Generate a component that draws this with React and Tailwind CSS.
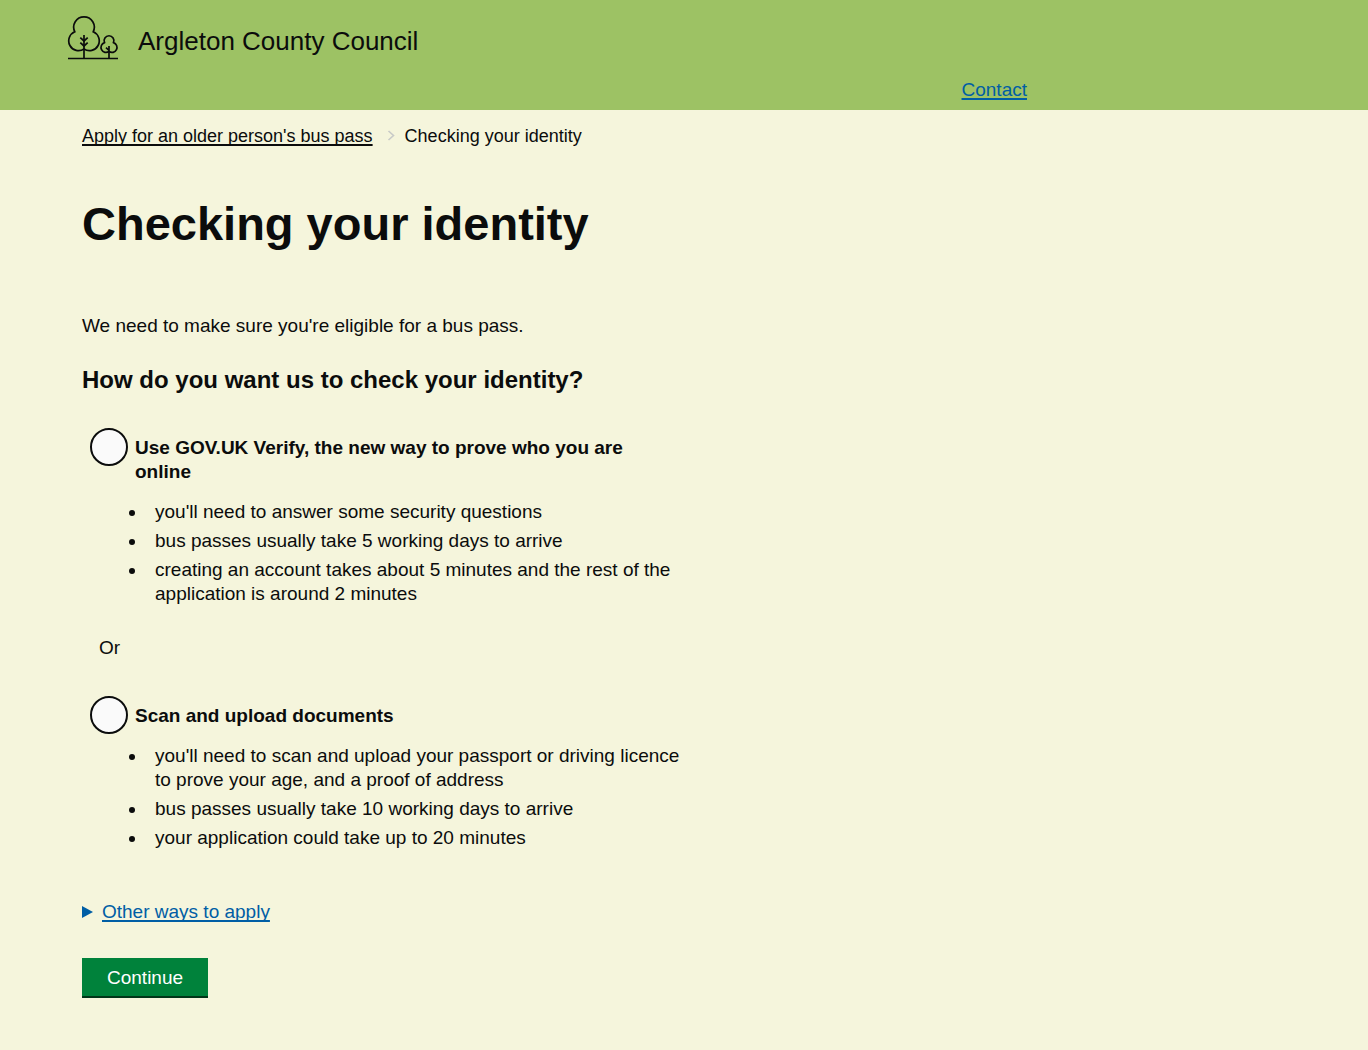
import React from "react";

const options = [
  {
    id: "verify",
    label: "Use GOV.UK Verify, the new way to prove who you are online",
    points: [
      "you'll need to answer some security questions",
      "bus passes usually take 5 working days to arrive",
      "creating an account takes about 5 minutes and the rest of the application is around 2 minutes",
    ],
  },
  {
    id: "upload",
    label: "Scan and upload documents",
    points: [
      "you'll need to scan and upload your passport or driving licence to prove your age, and a proof of address",
      "bus passes usually take 10 working days to arrive",
      "your application could take up to 20 minutes",
    ],
  },
];

function TreesLogo() {
  return (
    <svg
      aria-hidden="true"
      className="h-[46px] w-[52px] shrink-0"
      viewBox="0 0 52 46"
      fill="none"
      stroke="#0b0c0c"
      strokeWidth="1.7"
    >
      <path d="M1 43.5h50M17 44V20" />
      <path d="M7.800 16.800A10.300 10.300 0 1 1 26.200 16.800A9.800 9.800 0 1 1 17 34A9.800 9.800 0 1 1 7.800 16.800z" />
      <path d="M13.300 22.700l3.700 3.300 3.700-3.300M13.300 27.700l3.700 3.300 3.700-3.300" />
      <path d="M42 44V31M39 32.700l3 2.600" />
      <path d="M37.500 27.600A4.900 4.900 0 1 1 46.500 27.600A5.050 5.050 0 1 1 42 36.500A5.050 5.050 0 1 1 37.500 27.600z" />
    </svg>
  );
}

function Option({ id, label, points }) {
  return (
    <div className="flex pl-2">
      <input
        type="radio"
        name="identity"
        id={id}
        className="size-[38px] shrink-0 cursor-pointer appearance-none rounded-full border-2 border-[#0b0c0c] bg-[#fafafa] checked:bg-[#0b0c0c] checked:shadow-[inset_0_0_0_7px_#fafafa]"
      />
      <div className="min-w-0 pt-2 pl-[7px]">
        <label htmlFor={id} className="block max-w-[515px] cursor-pointer font-bold">
          {label}
        </label>
        <ul className="mt-4 flex list-disc flex-col gap-[5px] pl-3">
          {points.map((point) => (
            <li key={point} className="pl-2">{point}</li>
          ))}
        </ul>
      </div>
    </div>
  );
}

export default function App() {
  return (
    <div className="min-h-screen bg-[#f5f5dc] font-['Liberation_Sans',Arial,sans-serif] text-[19px] leading-6 text-[#0b0c0c]">
      <header className="bg-[#9dc264]">
        <div className="max-w-[1027px] pt-[15px] pb-2 pl-[67px]">
          <div className="flex items-center gap-[19px]">
            <TreesLogo />
            <span className="pt-[6px] text-[26px] leading-8">Argleton County Council</span>
          </div>
          <nav className="mt-[17px] flex justify-end">
            <a href="#contact" className="text-[#005ea5] underline decoration-2 underline-offset-2 [text-decoration-skip-ink:none]">
              Contact
            </a>
          </nav>
        </div>
      </header>

      <main className="max-w-[696px] pl-[82px]">
        <nav aria-label="Breadcrumb" className="pt-[14px]">
          <ol className="flex items-center text-[18px]">
            <li>
              <a href="#apply" className="underline decoration-2 underline-offset-2 [text-decoration-skip-ink:none]">
                Apply for an older person's bus pass
              </a>
            </li>
            <li className="flex items-center">
              <svg aria-hidden="true" className="mr-[9px] ml-[14px] h-3 w-[9px]" viewBox="0 0 9 12" fill="none" stroke="#c8cac8" strokeWidth="1.6">
                <path d="M1.500 1 6.500 5.500l-5 4.500" />
              </svg>
              Checking your identity
            </li>
          </ol>
        </nav>

        <h1 className="mt-[51px] text-[47px] leading-[50px] font-bold">Checking your identity</h1>

        <p className="mt-[65px]">We need to make sure you're eligible for a bus pass.</p>

        <form>
          <fieldset>
            <legend className="pt-[27px] text-[24px] leading-[30px] font-bold">
              How do you want us to check your identity?
            </legend>
            <div className="pt-[33px]">
              <Option {...options[0]} />
              <p className="mt-[30px] mb-9 pl-[17px]">Or</p>
              <Option {...options[1]} />
            </div>
          </fieldset>

          <details className="group mt-[50px]">
            <summary className="flex w-fit cursor-pointer list-none items-center gap-[9px] text-[#005ea5]">
              <svg aria-hidden="true" className="h-3 w-[11px] group-open:rotate-90" viewBox="0 0 11 12" fill="currentColor">
                <path d="M0 0 11 6 0 12z" />
              </svg>
              <span className="underline decoration-2 underline-offset-2 [text-decoration-skip-ink:none]">Other ways to apply</span>
            </summary>
          </details>

          <button
            type="button"
            className="mt-[34px] mb-12 block cursor-pointer border-b-2 border-[#003618] bg-[#00823b] px-[25px] pt-2 pb-[6px] text-white"
          >
            Continue
          </button>
        </form>
      </main>
    </div>
  );
}
